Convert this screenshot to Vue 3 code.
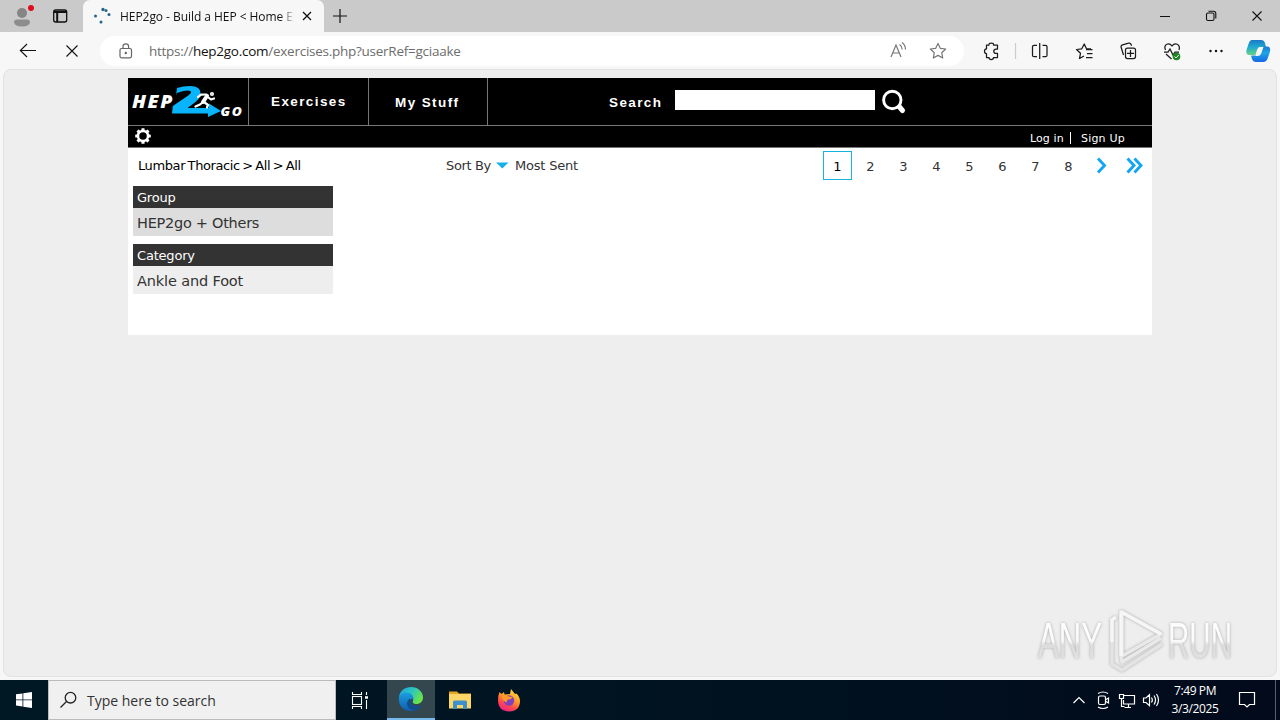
<script setup>
const pages = [2, 3, 4, 5, 6, 7, 8]
const teeth = [0, 45, 90, 135, 180, 225, 270, 315]
</script>

<template>
  <div class="screen">
    <div class="tabbar">
      <svg class="profile" width="44" height="32" viewBox="0 0 44 32">
        <circle cx="22" cy="13" r="5" fill="#858585" />
        <path d="M14 22.500q0-3 3-3h10q3 0 3 3q-1 4-8 4t-8-4z" fill="#8d8d8d" />
        <circle cx="31" cy="8" r="3" fill="#e00b1c" />
      </svg>
      <svg class="tabs-icon" width="39" height="32" viewBox="0 0 39 32" fill="none" stroke="#111" stroke-width="1.3">
        <rect x="9.700" y="10" width="13" height="12" rx="2" />
        <path d="M10 12h12.500M13.200 12v10" stroke-width="2" />
      </svg>
      <div class="tab">
        <svg class="spinner" width="20" height="20" viewBox="0 0 20 20" fill="#27658b">
          <circle cx="3.500" cy="10" r="1.500" /><circle cx="11" cy="3.500" r="1.700" /><circle cx="14" cy="4.500" r="1.500" /><circle cx="17" cy="8.500" r="1.500" /><circle cx="9" cy="16" r="1.500" />
        </svg>
        <span class="tab-title">HEP2go - Build a HEP &lt; Home Ex</span>
        <svg class="tab-close" width="10" height="10" viewBox="0 0 10 10" stroke="#111" stroke-width="1.300"><path d="M1 1l8 8M9 1l-8 8" /></svg>
      </div>
      <svg class="newtab" width="14" height="14" viewBox="0 0 14 14" stroke="#111" stroke-width="1.200"><path d="M0 7h14M7 0v14" /></svg>
      <svg class="winctl" width="138" height="32" viewBox="0 0 138 32" fill="none" stroke="#111" stroke-width="1.100">
        <path d="M18 16.500h10M110.500 11.500l9 9M119.500 11.500l-9 9" />
        <rect x="64.500" y="13" width="7.500" height="7.500" rx="1.500" />
        <path d="M66.500 11.300h5q2.300 0 2.300 2.300v5" />
      </svg>
    </div>

    <div class="toolbar">
      <svg class="nav" width="100" height="38" viewBox="0 0 100 38" fill="none" stroke="#111" stroke-width="1.100">
        <path d="M36 18.500H20.500M27 12l-6.700 6.500 6.700 6.500M66.500 13.500l11 11M77.500 13.500l-11 11" />
      </svg>
      <div class="address">
        <svg class="lock" width="14" height="16" viewBox="0 0 14 16" fill="none" stroke="#666" stroke-width="1.200">
          <rect x="1" y="5.500" width="11.500" height="9.300" rx="1.500" /><path d="M4 5.500V3.500q0-2.700 2.800-2.700t2.800 2.700v2" /><circle cx="6.800" cy="10" r=".6" fill="#555" />
        </svg>
        <span class="url"><span class="scheme">https://</span><b>hep2go.com</b><span class="path">/exercises.php?userRef=gciaake</span></span>
        <svg class="pill-icons" width="80" height="30" viewBox="0 0 80 30" fill="none" stroke="#777" stroke-width="1.200">
          <path d="M7 21l5-12 5 12M9 17h6M15.500 8.500q2.500 1.500 2.700 5M18 6.500q3.500 2.500 3.500 7" />
          <path d="M54 7.500l2.300 4.800 5.400.7-4 3.700 1 5.300-4.700-2.600-4.700 2.600 1-5.300-4-3.700 5.400-.7z" stroke-linejoin="round" />
        </svg>
      </div>
      <svg class="tools" width="316" height="38" viewBox="964 32 316 38" fill="none" stroke="#1b1b1b" stroke-width="1.250">
        <path d="M986.500 45h2.500q-.3-2 2.300-2t2.200 2h4v4h-1.500q-2.200 0-2.200 2.200t2.200 2.200h1.500v4.100h-4q0 2-2.200 2t-2.300-2h-2.500v-4q-2 0-2-2.300t2-2.300z" stroke-linejoin="round" />
        <path d="M1015.500 43v16" stroke="#ccc" />
        <path d="M1037 45.300h-3q-1.500 0-1.500 1.500v8.400q0 1.500 1.500 1.500h3M1042.500 45.300h3q1.500 0 1.500 1.500v8.400q0 1.500-1.500 1.500h-3M1039.700 43v16" />
        <path d="M1091 48.800h-4.500l-2.300-4.800-2.400 4.800-5.300.7 4 3.800-1 5.200 4.500-2.500M1086 49.500h6.500M1087 53.500h5.500M1086 57.500h6.500" stroke-linejoin="round" />
        <rect x="1125.500" y="48" width="10" height="10.500" rx="2" /><path d="M1127 53.300h7M1130.500 50v7M1123.500 55l-2.300-7.500q-.6-2 1.400-2.600l6-1.700q2-.5 2.600 1.500l.3 1" />
        <path d="M1165.500 50q-2-4.500 2-6 2.500-.7 4.500 2 2-2.700 4.500-2 4 1.500 2.500 6M1164 52h4l2-3 3 6 2-3h4M1166 54l5.500 5" />
        <circle cx="1176.500" cy="56.500" r="3.800" fill="#1b8623" stroke="none" /><path d="M1174.500 56.500l1.500 1.500 2.700-3" stroke="#fff" stroke-width="1" />
        <g fill="#111" stroke="none"><circle cx="1210.500" cy="51" r="1.200" /><circle cx="1216" cy="51" r="1.200" /><circle cx="1221.500" cy="51" r="1.200" /></g>
        <defs>
          <linearGradient id="ca" x1="0" y1="0" x2="0" y2="1"><stop offset="0" stop-color="#1978c8" /><stop offset=".5" stop-color="#20add0" /><stop offset="1" stop-color="#68d47c" /></linearGradient>
          <linearGradient id="cb" x1="0" y1="0" x2="0" y2="1"><stop offset="0" stop-color="#1d78d4" /><stop offset=".4" stop-color="#1da5e4" /><stop offset="1" stop-color="#1669e7" /></linearGradient>
        </defs>
        <g stroke="none">
          <path d="M1252 40h9q3 0 4 3l1 4h-5q-3 0-4 3l-1.500 5h-6q-4 0-3-5l2-6q1.200-4 3.500-4z" fill="url(#ca)" />
          <path d="M1264.500 46.500h2.500q4 0 3 5l-2 6q-1.300 4.500-5 4.500h-7q-3 0-4-3l-1-3.500h4q2.500 0 3.500-3l1.300-3.500q1-2.500 4.700-2.500z" fill="url(#cb)" />
          <path d="M1259.500 47h4l-2.500 7q-.8 2-3.500 2h-2l2-6q.7-2.400 2-3z" fill="#f7f7f7" />
        </g>
      </svg>
    </div>

    <div class="viewport">
      <main class="page">
        <header class="site-head">
          <svg class="logo" width="120" height="47" viewBox="0 0 120 47">
            <g fill="#fff" font-family="'Open Sans','Liberation Sans',sans-serif" font-weight="800" font-style="italic">
              <text x="4" y="29.500" font-size="17.500" textLength="42" lengthAdjust="spacingAndGlyphs">HEP</text>
              <text x="92.500" y="37.500" font-size="11.500" textLength="23" lengthAdjust="spacingAndGlyphs">GO</text>
            </g>
            <path d="M48 17.500L49 10q6-2 13-2 11 0 10.500 7.500-.5 5.500-7 10l-6 4.500H81v-4.500l12 7.500-13 6v-3.500H44l.8-7.500 15.500-10.500q4-3 2-4.500-3-1.500-13.500 2z" fill="#08b4fb" />
            <g fill="none" stroke="#fff" stroke-linecap="round" stroke-linejoin="round">
              <circle cx="84" cy="16" r=".8" stroke-width="2.500" /><path d="M79 18l-4 6" stroke-width="4" /><path d="M76 24l4 3-1 2.500M75 24l-3 2.500-4.500 2M78.500 16.500l-5.500.2-3 2.500M80.500 19.500l2.500 2 3-1" stroke-width="2.200" />
            </g>
          </svg>
          <div class="menu ex"><span>Exercises</span></div>
          <div class="menu my"><span>My Stuff</span></div>
          <label class="search-label"><span>Search</span></label>
          <div class="search-box"></div>
          <svg class="mag" width="28" height="28" viewBox="0 0 28 28" fill="none" stroke="#fff"><circle cx="12.300" cy="12" r="8.700" stroke-width="2.900" /><path d="M19.500 19l3 3.500" stroke-width="5" stroke-linecap="round" /></svg>
        </header>
        <div class="subbar">
          <svg width="18" height="18" viewBox="-9 -9 18 18">
            <circle r="5" fill="none" stroke="#fff" stroke-width="2.500" />
            <rect v-for="a in teeth" :key="a" x="-1.600" y="-7.800" width="3.200" height="3.300" rx=".6" fill="#fff" :transform="`rotate(${a})`" />
          </svg>
          <span class="login">Log in</span><i></i><span class="signup">Sign Up</span>
        </div>
        <div class="crumbs">
          <span class="trail">Lumbar Thoracic &gt; All &gt; All</span>
          <span class="sort">Sort By</span>
          <svg class="caret" width="13" height="7" viewBox="0 0 13 7"><path d="M0 .5h12.500L6.300 6.500z" fill="#17b1e7" /></svg>
          <span class="most">Most Sent</span>
          <nav class="pager">
            <span class="cur">1</span>
            <span v-for="p in pages" :key="p">{{ p }}</span>
          </nav>
          <svg class="arrows" width="50" height="20" viewBox="0 0 50 20" fill="none" stroke="#12a5f4" stroke-width="2.900"><path d="M4 2.500l6.500 7-6.500 7M33.500 2.500l6.500 7-6.500 7M40.500 2.500l6.500 7-6.500 7" /></svg>
        </div>
        <aside>
          <h4><span class="group">Group</span></h4>
          <p class="dark"><span class="others">HEP2go + Others</span></p>
          <h4><span class="group">Category</span></h4>
          <p><span class="ankle">Ankle and Foot</span></p>
        </aside>
      </main>
      <svg class="watermark" width="220" height="76" viewBox="1030 602 220 76">
        <defs><linearGradient id="wm" x1="0" y1="0" x2="0" y2="1"><stop offset="0" stop-color="#fff" /><stop offset=".5" stop-color="#fafafa" /><stop offset=".58" stop-color="#dcdcdc" /><stop offset="1" stop-color="#e5e5e5" /></linearGradient></defs>
        <g class="mark" fill="url(#wm)" font-family="'Liberation Sans',sans-serif">
          <text x="1038" y="658" font-size="50" textLength="64" lengthAdjust="spacingAndGlyphs">ANY</text>
          <text x="1168" y="658" font-size="50" textLength="64" lengthAdjust="spacingAndGlyphs">RUN</text>
        </g>
        <g class="mark" fill="none" stroke="#f6f6f6" stroke-width="3.500" stroke-linejoin="round">
          <path d="M1112 619v45l10 6 40-26" stroke="#e4e4e4" />
          <path d="M1122 612l39 22-39 22zM1121 656l1 6 39-24" stroke="#e9e9e9" />
          <path d="M1121 656v-44l40 22M1112 642v-22l4-3" />
        </g>
      </svg>
    </div>

    <footer class="taskbar">
      <div class="start"><svg width="16" height="16" viewBox="0 0 16 16" fill="#fff"><path d="M0 2.300l6.500-.9v6.100H0zM7.300 1.300L16 0v7.500H7.300zM0 8.300h6.500v6.200L0 13.600zM7.300 8.300H16V16l-8.700-1.300z" /></svg></div>
      <div class="find">
        <svg width="18" height="18" viewBox="0 0 18 18" fill="none" stroke="#222" stroke-width="1.300"><circle cx="10.500" cy="6.700" r="5.300" /><path d="M6.500 10.500L.5 16.500" /></svg>
        <span>Type here to search</span>
      </div>
      <div class="slot s51"><svg width="18" height="17" viewBox="0 0 18 17" fill="none" stroke="#fff" stroke-width="1.100"><path d="M1.500 0v2.500h9V0M1.500 17v-2.500h9V17M15.500 0v3M15.500 8v9" /><rect x="1.500" y="4.500" width="9" height="8" /><path d="M14 5.500h3" stroke-width="2.500" /></svg></div>
      <div class="slot active">
        <svg width="26" height="26" viewBox="0 0 26 26">
          <defs><linearGradient id="ea" x1="0" y1="0" x2="1" y2=".5"><stop offset="0" stop-color="#259fdc" /><stop offset=".5" stop-color="#29c3c7" /><stop offset="1" stop-color="#69e34c" /></linearGradient><linearGradient id="eb" x1="0" y1="0" x2="0" y2="1"><stop offset="0" stop-color="#1a9ee2" /><stop offset="1" stop-color="#115da9" /></linearGradient></defs>
          <path d="M1 11C2 4.500 7 1 13 1c7 0 12 5 12 10.500 0 4-3 6.500-6.500 6.500-3 0-4.500-1.200-3.500-3.200C16 11 13 8 9.500 8 6 8 2.500 9 1 11z" fill="url(#ea)" />
          <path d="M1 11c1-3 4-4.500 7.500-4.500 4.500 0 7.200 3 7 6.500-5-1.500-7.500 7-1.500 10 1.500.8 3 1 4.500.8C8 28-.5 20.500 1 11z" fill="url(#eb)" />
          <path d="M12 12.500c-6 4-2.500 11 4 11.700 3 0 6.500-2.200 7.500-5-5 2.800-11.500-.2-11.500-6.700z" fill="#124d8d" />
        </svg>
      </div>
      <div class="slot"><svg width="22" height="20" viewBox="0 0 22 20"><path d="M0 1.500h8l2 2h12V18H0z" fill="#e8a723" /><path d="M0 4h22v14.500H0z" fill="#fcd667" /><path d="M4 19v-7q0-1.500 1.500-1.500h11q1.500 0 1.500 1.500v7h-4v-4H8v4z" fill="#3e8fca" /></svg></div>
      <div class="slot"><svg width="24" height="24" viewBox="0 0 24 24">
        <defs><linearGradient id="fa" x1=".8" y1="0" x2=".3" y2="1"><stop offset="0" stop-color="#ffe43b" /><stop offset=".45" stop-color="#ff9529" /><stop offset=".75" stop-color="#ff4252" /><stop offset="1" stop-color="#e7238c" /></linearGradient></defs>
        <path d="M2.500 4l2 2 2.500-2 .5 2.500 5.500-.5 1-5 4 5 1.500-.5Q23 9 23 13q0 10-11 10.500Q1 23 1 12q0-4.500 1.500-8z" fill="url(#fa)" />
        <circle cx="12" cy="12.500" r="5.200" fill="#8140bd" /><path d="M4.500 8q4-2.500 7 .5l4 .5q-1 2.500-4.500 2.500-2 1.500-1 3-4-1-5.500-6.500z" fill="#ff9a28" />
      </svg></div>
      <div class="spring"></div>
      <svg class="tray" width="96" height="40" viewBox="1070 680 96 40" fill="none" stroke="#fff" stroke-width="1.200">
        <path d="M1073.500 703l5.500-5.500 5.500 5.500" />
        <rect x="1098.500" y="696" width="7" height="8.500" rx="1.500" /><path d="M1106 699.500l2.500-1.500v5l-2.500-1.500M1098 693.500q5-3 10 0M1098 707q5 3 10 0" />
        <path d="M1124 695.500h10.500v8.500h-11v-4M1128.500 704v3.500M1124.500 707.500h6.500M1119.500 694.500h4v4h-4zM1121.500 698.500v8h3" />
        <path d="M1143.500 698h2.500l3.500-3.300v11l-3.500-3.200h-2.500zM1151.500 697.500q1.700 2.500 0 5M1154 695.500q3 4.500 0 9M1156.500 694q4 6 0 12" />
      </svg>
      <div class="clock"><span class="t">7:49 PM</span><span class="d">3/3/2025</span></div>
      <svg class="note" width="60" height="40" viewBox="1220 680 60 40" fill="none" stroke="#fff" stroke-width="1.200"><path d="M1239.500 692.500h15v12h-5l-2.500 2.500-2.500-2.500h-5z" /><path d="M1275.500 680v40" stroke="#59606c" stroke-width="1" /></svg>
    </footer>
  </div>
</template>

<style>
body { margin: 0; overflow: hidden; }
</style>
<style scoped>
.screen { width: 1280px; height: 720px; display: flex; flex-direction: column; background: #f7f7f7; font-family: "Open Sans", "Noto Sans", sans-serif; overflow: hidden; }
.screen * { box-sizing: border-box; }
svg { display: block; flex: none; }
span { white-space: nowrap; }
.tabbar { height: 32px; flex: none; background: #cacaca; display: flex; align-items: center; }
.tab { width: 241px; height: 32px; background: #f7f7f7; border-radius: 7px 7px 0 0; display: flex; align-items: center; }
.spinner { margin-left: 9px; }
.tab-title { margin-left: 8px; width: 174px; overflow: hidden; font-size: 12px; letter-spacing: -.05px; color: #111; mask-image: linear-gradient(90deg, #000 160px, transparent 175px); }
.tab-close { margin-left: 8px; }
.newtab { margin-left: 9px; }
.winctl { margin-left: auto; }
.toolbar { height: 38px; flex: none; display: flex; }
.address { width: 864px; height: 30px; margin-top: 4px; border-radius: 15px; background: #fff; display: flex; align-items: center; }
.lock { margin-left: 19px; }
.url { margin-left: 16px; font-size: 13.5px; letter-spacing: -.26px; color: #6d6d6d; }
.url b { font-weight: 400; color: #111; }
.pill-icons { margin-left: auto; }
.viewport { width: 1274px; height: 608px; flex: none; margin: -1px 3px 0; background: #eee; border: 1px solid #e2e2e2; border-radius: 8px; display: flex; flex-direction: column; }
.page { width: 1024px; height: 257px; flex: none; margin: 8px 0 0 124px; background: #fff; font-family: "DejaVu Sans", sans-serif; font-size: 13px; color: #333; }
.site-head { height: 48px; background: #000; border-bottom: 1px solid #777; display: flex; color: #fff; font-family: "Liberation Sans", sans-serif; font-weight: bold; font-size: 13.5px; letter-spacing: 1.4px; }
.menu { height: 47px; border-left: 1px solid #777; line-height: 47px; }
.menu.ex { width: 120px; padding-left: 22px; }
.menu.my { width: 120px; padding-left: 26px; border-right: 1px solid #777; line-height: 49px; }
.search-label { width: 187px; padding-left: 121px; line-height: 49px; }
.search-box { width: 200px; height: 20px; margin-top: 12px; background: #fff; }
.mag { margin: 10px 0 0 5px; }
.subbar { height: 22px; background: #000; border-bottom: 1px solid #777; display: flex; align-items: center; color: #fff; font-size: 11px; }
.subbar svg { margin: -1px 0 0 6px; }
.login { margin-left: 878px; width: 40px; padding-top: 3px; letter-spacing: .1px; }
.subbar i { width: 1px; height: 12px; background: #fff; margin-top: 2px; }
.signup { margin-left: 10px; padding-top: 3px; letter-spacing: .2px; }
.crumbs { height: 38px; display: flex; line-height: 35px; }
.trail { margin-left: 10px; width: 308px; color: #000; letter-spacing: -.4px; word-spacing: -1.2px; }
.sort { width: 50px; letter-spacing: -.35px; }
.caret { margin-top: 14px; }
.most { margin-left: 6px; width: 308px; letter-spacing: -.2px; }
.pager { display: flex; gap: 4px; margin-top: 3px; }
.pager span { width: 29px; height: 29px; line-height: 31px; text-align: center; }
.pager span.cur { border: 1px solid #19b2dc; line-height: 29px; color: #000; }
.arrows { margin: 8px 0 0 11px; }
aside { width: 200px; margin-left: 5px; }
h4 { margin: 0; height: 22px; line-height: 23px; padding-left: 4px; background: #333; color: #fff; font-weight: 400; font-size: 13px; }
.group { letter-spacing: -.2px; }
p { margin: 0 0 8px; height: 28px; line-height: 31px; padding-left: 4px; background: #eee; font-size: 14.5px; }
p.dark { background: #ddd; }
.others { letter-spacing: -.27px; }
.ankle { letter-spacing: -.15px; }
.watermark { margin: auto 0 -2px 1026px; }
.mark { filter: drop-shadow(0 0 1.500px #aaa); }
.taskbar { height: 40px; margin-top: 3px; flex: none; display: flex; background: linear-gradient(90deg, #001823, #001220 60%, #020a1b); color: #fff; }
.start { width: 48px; display: flex; align-items: center; justify-content: center; }
.find { width: 288px; background: #f0f0f0; border: 1px solid #bbb; display: flex; align-items: center; color: #333; font-size: 14px; }
.find svg { margin-left: 11px; }
.find span { margin-left: 9px; }
.slot { width: 49px; display: flex; align-items: center; justify-content: center; }
.slot.s51 { width: 51px; padding-right: 4px; }
.slot.active { width: 48px; background: #34474f; border-bottom: 2px solid #76b9ed; }
.spring { flex: 1; }
.clock { width: 58px; margin-right: -4px; display: flex; flex-direction: column; align-items: center; padding-top: 2px; font-size: 12px; line-height: 18px; letter-spacing: -.4px; }
</style>
